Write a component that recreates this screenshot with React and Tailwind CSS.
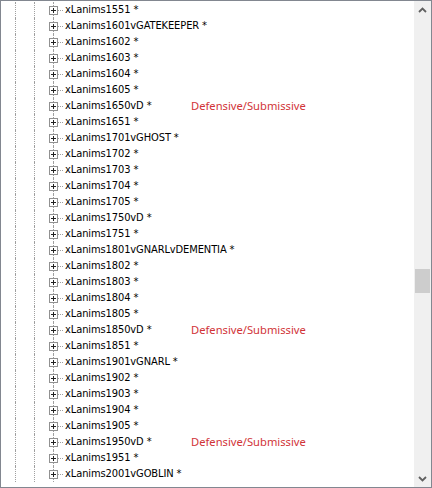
import React from "react";

const items = [
  ["1551"],
  ["1601vGATEKEEPER"],
  ["1602"],
  ["1603"],
  ["1604"],
  ["1605"],
  ["1650vD", true],
  ["1651"],
  ["1701vGHOST"],
  ["1702"],
  ["1703"],
  ["1704"],
  ["1705"],
  ["1750vD"],
  ["1751"],
  ["1801vGNARLvDEMENTIA"],
  ["1802"],
  ["1803"],
  ["1804"],
  ["1805"],
  ["1850vD", true],
  ["1851"],
  ["1901vGNARL"],
  ["1902"],
  ["1903"],
  ["1904"],
  ["1905"],
  ["1950vD", true],
  ["1951"],
  ["2001vGOBLIN"],
];

function Guide() {
  return (
    <div className="w-[19px] h-4 pl-[9px] shrink-0">
      <div className="h-full border-l border-dotted border-[#a0a0a0]" />
    </div>
  );
}

function Expander() {
  return (
    <div className="relative w-[19px] h-4 pl-[9px] shrink-0">
      <div className="h-full border-l border-dotted border-[#a0a0a0]" />
      <div className="absolute left-[14px] top-[8px] w-[5px] border-t border-dotted border-[#a0a0a0]" />
      <div className="absolute left-[5px] top-[4px] w-[9px] h-[9px] border border-[#919191] bg-white">
        <div className="absolute left-[1px] top-[3px] w-[5px] h-px bg-[#222]" />
        <div className="absolute left-[3px] top-[1px] w-px h-[5px] bg-[#222]" />
      </div>
    </div>
  );
}

function Row({ name, note }) {
  return (
    <div className="flex h-4 items-center">
      <Guide />
      <Guide />
      <Expander />
      <span
        className="ml-[2px] w-[126px] shrink-0 whitespace-nowrap text-[11px] leading-4 text-black tracking-[-0.1px]"
        style={{ fontFamily: '"DejaVu Sans Condensed", "DejaVu Sans", sans-serif' }}
      >
        xLanims{name} *
      </span>
      {note && (
        <span className="whitespace-nowrap text-[11.2px] leading-4 text-[#d13438] font-['Noto_Sans',sans-serif]">
          Defensive/Submissive
        </span>
      )}
    </div>
  );
}

export default function App() {
  return (
    <div className="w-[432px] h-[488px] border border-[#828790] bg-white flex overflow-hidden">
      <div className="flex-1 overflow-hidden pl-[5px] pt-px">
        {items.map(([name, note]) => (
          <Row key={name} name={name} note={note} />
        ))}
      </div>
      <div className="w-[17px] bg-[#f0f0f0] flex flex-col">
        <div className="h-[17px] flex items-center justify-center">
          <svg width="9" height="6" viewBox="0 0 9 6">
            <path d="M1 5 L4.5 1.5 L8 5" fill="none" stroke="#606060" strokeWidth="1.8" />
          </svg>
        </div>
        <div className="flex-1 px-px">
          <div className="mt-[251px] h-[24px] bg-[#cdcdcd]" />
        </div>
        <div className="h-[17px] flex items-center justify-center">
          <svg width="9" height="6" viewBox="0 0 9 6">
            <path d="M1 1 L4.5 4.5 L8 1" fill="none" stroke="#606060" strokeWidth="1.8" />
          </svg>
        </div>
      </div>
    </div>
  );
}
